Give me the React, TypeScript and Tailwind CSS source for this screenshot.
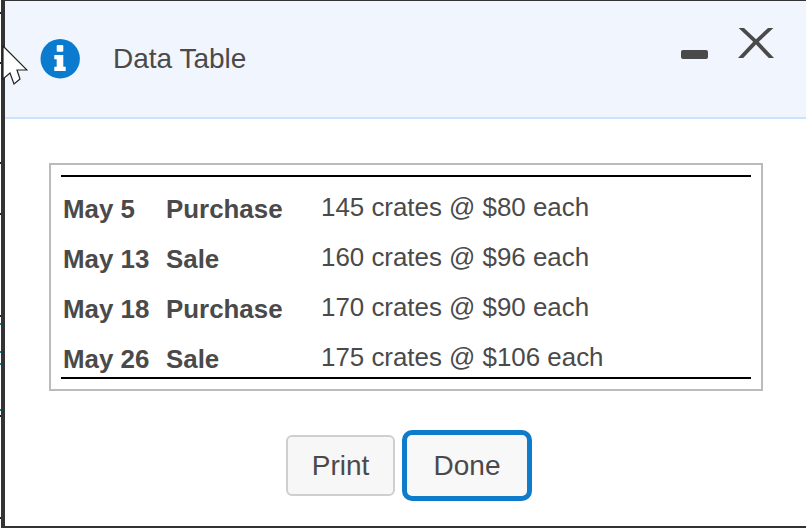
import React from "react";

const rows = [
  { date: "May 5", kind: "Purchase", detail: "145 crates @ $80 each" },
  { date: "May 13", kind: "Sale", detail: "160 crates @ $96 each" },
  { date: "May 18", kind: "Purchase", detail: "170 crates @ $90 each" },
  { date: "May 26", kind: "Sale", detail: "175 crates @ $106 each" },
];

// bits of the page behind the dialog, showing at the window's left edge
const specks = [
  { y: 12, c: "#222222" }, { y: 62, c: "#222222" }, { y: 162, c: "#222222" }, { y: 213, c: "#222222" },
  { y: 315, c: "#222222" }, { y: 323, c: "#1f7f95" }, { y: 351, c: "#1f7f95" }, { y: 363, c: "#1f7f95" },
  { y: 409, c: "#1f7f95" }, { y: 415, c: "#222222" }, { y: 517, c: "#222222" },
];

export default function App() {
  return (
    <div className="relative w-[806px] h-[528px] overflow-hidden bg-white font-['Liberation_Sans',Arial,sans-serif] text-[#4a4a4a]">
      <div className="flex flex-col h-full ml-px border-l-[4px] border-t border-b-2 border-[#333333] bg-white">
        {/* Header */}
        <header className="flex items-center h-[118px] shrink-0 border-b-2 border-[#cce4fb] bg-[#f1f6fe] pl-[35px]">
          <svg className="shrink-0" width="40" height="40" viewBox="0 0 40 40">
            <circle cx="20.2" cy="19.8" r="19.7" fill="#0a7bcf" />
            <rect x="16.7" y="6" width="6.6" height="6.7" rx="1" fill="#ffffff" />
            <path d="M14.3 16 h9 v11.7 h2.4 v4.3 h-11.4 v-4.3 h2.4 v-7.4 h-2.4 z" fill="#ffffff" />
          </svg>
          <h1 className="ml-[33px] text-[28px] leading-none font-normal">Data Table</h1>
          <div className="ml-auto flex items-start h-full">
            <div className="w-[27px] h-[9px] mt-[49px] rounded-[2px] bg-[#4a4a4a]" />
            <svg className="ml-[30px] mr-[32px] mt-[27px]" width="36" height="30" viewBox="0 0 36 30">
              <path d="M0.6 0 H6 L18 11.2 L30 0 H35.4 L20.8 13.8 L36 30 H30.8 L18 16.6 L5.2 30 H0 L15.2 13.8 Z" fill="#4a4a4a" />
            </svg>
          </div>
        </header>

        {/* Table */}
        <div className="mt-[44px] mx-[44px] w-[714px] h-[228px] border-2 border-[#bbbbbb] px-[10px] pt-[10px]">
          <div className="h-[204px] border-y-2 border-black">
            <table className="border-collapse">
              <tbody>
                {rows.map((r) => (
                  <tr key={r.date} className="h-[50px]">
                    <td className="w-[105px] pl-[2px] pt-[15px] text-[25.9px] font-bold leading-none">{r.date}</td>
                    <td className="w-[155px] pt-[15px] text-[25.9px] font-bold leading-none">{r.kind}</td>
                    <td className="pt-[11px] text-[25.9px] leading-none">{r.detail}</td>
                  </tr>
                ))}
              </tbody>
            </table>
          </div>
        </div>

        {/* Buttons */}
        <div className="flex items-center mt-[39px] ml-[281px] gap-[7px]">
          <button className="w-[109px] h-[61px] rounded-[6px] border-2 border-[#cfcfcf] bg-[#f7f7f7] text-[28px]">Print</button>
          <button className="w-[130px] h-[71px] rounded-[10px] border-[5px] border-[#0f7bcb] bg-[#f8f8f8] text-[28px]">Done</button>
        </div>
      </div>

      {specks.map((s) => (
        <div key={s.y} className="absolute left-0 w-px h-[2px]" style={{ top: s.y, backgroundColor: s.c }} />
      ))}

      {/* Mouse cursor over the window edge */}
      <svg className="absolute left-[2px] top-[45px]" width="26" height="40" viewBox="0 0 26 40">
        <path d="M1 1 L25 25 L15 25 L18 34 L12 39 L8 28 L1 34 Z" fill="#ffffff" stroke="#222222" strokeWidth="1.2" />
      </svg>
    </div>
  );
}
